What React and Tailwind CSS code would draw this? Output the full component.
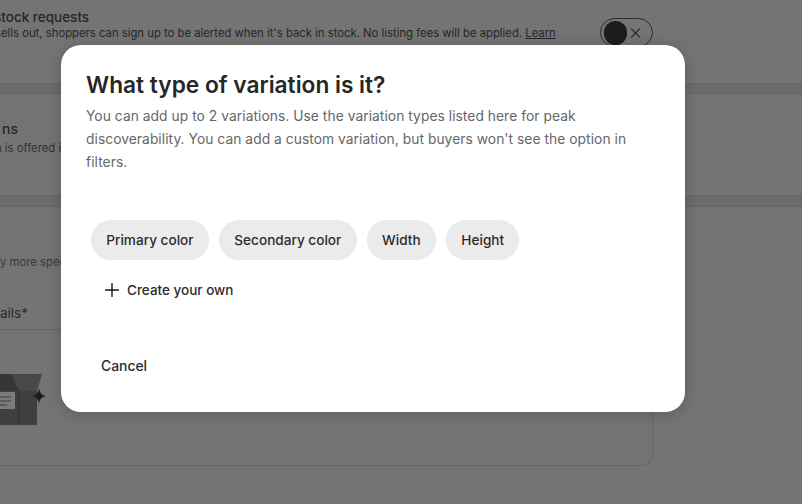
import { Plus, X } from "lucide-react";

const variationTypes = ["Primary color", "Secondary color", "Width", "Height"];

const BoxArt = () => (
  <svg width="48" height="64" viewBox="0 0 48 64" className="block">
    <path d="M0 10 H13 L19 20 L35 20 L37 20 V55 H0 Z" fill="#3f3f3f" />
    <path d="M12 4 H42 L37 21 H19 Z" fill="#484848" />
    <path d="M0 4 H12 L19 21 H0 Z" fill="#363636" />
    <rect x="0" y="22" width="15" height="17" fill="#7b7b7b" />
    <path d="M0 27 H11 M0 31 H11 M0 35 H7" stroke="#3f3f3f" strokeWidth="1" />
    <path d="M19 21 V54" stroke="#2d2d2d" strokeWidth="1" />
    <path d="M39 18 Q39.6 25 46 26 Q39.6 27 39 34 Q38.4 27 32 26 Q38.4 25 39 18 Z" fill="#1c1c1c" />
  </svg>
);

// Dimmed listing form behind the dialog
const BackgroundPage = () => (
  <div className="h-[504px] overflow-hidden bg-[#747474] text-[#262626]">
    <div className="h-[83px] pt-[9px]">
      <div className="-ml-[6px] text-[13.5px] leading-[16px] font-medium whitespace-nowrap">stock requests</div>
      <div className="-ml-[5px] mt-[1px] text-[11.3px] leading-[14px] whitespace-nowrap">
        sells out, shoppers can sign up to be alerted when it's back in stock. No listing fees will be applied.{" "}
        <span className="underline">Learn</span>
      </div>
    </div>
    <div className="h-[11px] border-y border-[#666666] bg-[#6c6c6c]" />
    <div className="h-[101px] pt-[27px]">
      <div className="ml-[2px] text-[14px] leading-[16px] font-medium">ns</div>
      <div className="-ml-[5px] mt-[4px] text-[11.3px] leading-[14px] whitespace-nowrap text-[#333333]">n is offered in</div>
    </div>
    <div className="h-[12px] border-y border-[#666666] bg-[#6c6c6c]" />
    <div className="pt-[48px] text-[11.3px] leading-[14px] whitespace-nowrap text-[#383838]">y more specific</div>
    <div className="mt-[36px] w-[653px] rounded-br-xl border-r border-b border-[#666666]">
      <div className="border-b border-[#666666] pb-[8px] text-[13.5px] leading-[16px] text-[#2b2b2b]">
        ails<span className="text-[#4a1f2c]">*</span>
      </div>
      <div className="h-[135px] pt-[40px]">
        <BoxArt />
      </div>
    </div>
  </div>
);

export default function App() {
  return (
    <div className="relative h-[504px] w-[802px] overflow-hidden font-['Inter',sans-serif]">
      <BackgroundPage />

      <div className="absolute top-[18px] left-[600px] flex h-[29px] w-[53px] items-center justify-between rounded-full border border-[#2b2b2b] pr-[8px] pl-[3px]">
        <span className="h-[24px] w-[24px] rounded-full bg-[#1c1c1c]" />
        <X size={18} strokeWidth={1.5} className="text-[#262626]" />
      </div>

      <div
        role="dialog"
        className="absolute top-[45px] left-[61px] flex h-[367px] w-[624px] flex-col rounded-[20px] bg-white px-[25px] pt-[25px] shadow-[0_2px_16px_rgba(0,0,0,0.2)]"
      >
        <h1 className="text-[22.7px] leading-[30px] font-semibold text-[#262626]">What type of variation is it?</h1>
        <p className="mt-[5px] max-w-[545px] text-[13.8px] leading-[23px] tracking-[0.05px] text-[#666666]">
          You can add up to 2 variations. Use the variation types listed here for peak discoverability. You can add a
          custom variation, but buyers won't see the option in filters.
        </p>

        <div className="mt-[46px] ml-[5px] flex gap-[10.2px]">
          {variationTypes.map((label) => (
            <button
              key={label}
              className="flex h-[40px] items-center rounded-full bg-[#ebebeb] px-[15.3px] text-[13.6px] font-medium whitespace-nowrap text-[#2b2b2b]"
            >
              {label}
            </button>
          ))}
        </div>

        <button className="mt-[18px] ml-[15px] flex h-[24px] items-center gap-[4px] text-[13.5px] font-medium text-[#2b2b2b]">
          <Plus size={22} strokeWidth={1.5} className="text-[#111111]" />
          Create your own
        </button>

        <button className="mt-[54px] ml-[15px] self-start text-[13.9px] leading-[20px] font-medium text-[#2b2b2b]">
          Cancel
        </button>
      </div>
    </div>
  );
}
